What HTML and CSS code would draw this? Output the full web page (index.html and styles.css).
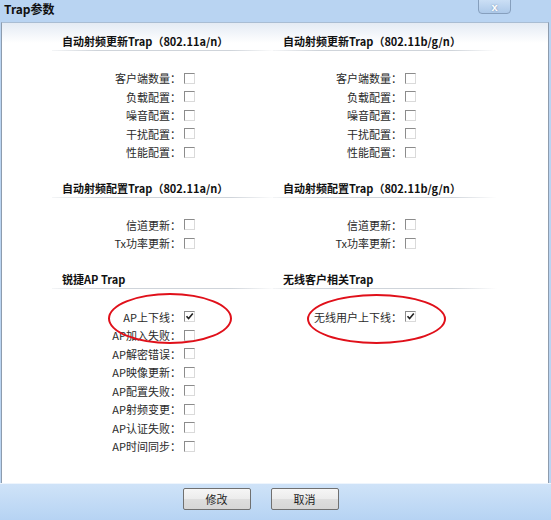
FILE: index.html
```html
<!DOCTYPE html>
<html lang="zh-CN">
<head>
    <meta charset="UTF-8">
    <title>Trap参数</title>
    <link rel="stylesheet" href="styles.css">
</head>
<body>
    <div class="dialog">
        <div class="titlebar">
            <span class="title">Trap参数</span>
            <button class="close-btn">x</button>
        </div>

        <div class="content">
            <div class="section">
                <div class="col">
                    <h3 class="col-title">自动射频更新Trap（802.11a/n）</h3>
                    <div class="rows">
                        <div class="row"><span class="label">客户端数量<span class="colon">：</span></span><span class="check"></span></div>
                        <div class="row"><span class="label">负载配置<span class="colon">：</span></span><span class="check"></span></div>
                        <div class="row"><span class="label">噪音配置<span class="colon">：</span></span><span class="check"></span></div>
                        <div class="row"><span class="label">干扰配置<span class="colon">：</span></span><span class="check"></span></div>
                        <div class="row"><span class="label">性能配置<span class="colon">：</span></span><span class="check"></span></div>
                    </div>
                </div>
                <div class="col">
                    <h3 class="col-title">自动射频更新Trap（802.11b/g/n）</h3>
                    <div class="rows">
                        <div class="row"><span class="label">客户端数量<span class="colon">：</span></span><span class="check"></span></div>
                        <div class="row"><span class="label">负载配置<span class="colon">：</span></span><span class="check"></span></div>
                        <div class="row"><span class="label">噪音配置<span class="colon">：</span></span><span class="check"></span></div>
                        <div class="row"><span class="label">干扰配置<span class="colon">：</span></span><span class="check"></span></div>
                        <div class="row"><span class="label">性能配置<span class="colon">：</span></span><span class="check"></span></div>
                    </div>
                </div>
            </div>

            <div class="section">
                <div class="col">
                    <h3 class="col-title">自动射频配置Trap（802.11a/n）</h3>
                    <div class="rows">
                        <div class="row"><span class="label">信道更新<span class="colon">：</span></span><span class="check"></span></div>
                        <div class="row"><span class="label">Tx功率更新<span class="colon">：</span></span><span class="check"></span></div>
                    </div>
                </div>
                <div class="col">
                    <h3 class="col-title">自动射频配置Trap（802.11b/g/n）</h3>
                    <div class="rows">
                        <div class="row"><span class="label">信道更新<span class="colon">：</span></span><span class="check"></span></div>
                        <div class="row"><span class="label">Tx功率更新<span class="colon">：</span></span><span class="check"></span></div>
                    </div>
                </div>
            </div>

            <div class="section section-last">
                <div class="col">
                    <h3 class="col-title">锐捷AP Trap</h3>
                    <div class="rows">
                        <div class="row"><span class="label">AP上下线<span class="colon">：</span></span><span class="check checked"><svg viewBox="0 0 11 11" width="11" height="11"><path d="M2.5 5.2 L4.6 7.6 L8.8 2.6" fill="none" stroke="#222" stroke-width="1.6"/></svg></span></div>
                        <div class="row"><span class="label">AP加入失败<span class="colon">：</span></span><span class="check"></span></div>
                        <div class="row"><span class="label">AP解密错误<span class="colon">：</span></span><span class="check"></span></div>
                        <div class="row"><span class="label">AP映像更新<span class="colon">：</span></span><span class="check"></span></div>
                        <div class="row"><span class="label">AP配置失败<span class="colon">：</span></span><span class="check"></span></div>
                        <div class="row"><span class="label">AP射频变更<span class="colon">：</span></span><span class="check"></span></div>
                        <div class="row"><span class="label">AP认证失败<span class="colon">：</span></span><span class="check"></span></div>
                        <div class="row"><span class="label">AP时间同步<span class="colon">：</span></span><span class="check"></span></div>
                    </div>
                </div>
                <div class="col">
                    <h3 class="col-title">无线客户相关Trap</h3>
                    <div class="rows">
                        <div class="row"><span class="label">无线用户上下线<span class="colon">：</span></span><span class="check checked"><svg viewBox="0 0 11 11" width="11" height="11"><path d="M2.5 5.2 L4.6 7.6 L8.8 2.6" fill="none" stroke="#222" stroke-width="1.6"/></svg></span></div>
                    </div>
                </div>
            </div>

            <div class="mark mark-left"></div>
            <div class="mark mark-right"></div>
        </div>

        <div class="footer">
            <button class="btn">修改</button>
            <button class="btn">取消</button>
        </div>
    </div>
</body>
</html>
```

FILE: styles.css
```css
body {
    margin: 0;
    padding: 0;
    font-family: "Noto Sans CJK SC", "Liberation Sans", sans-serif;
    font-size: 11px;
    color: #1e1e1e;
    background: #ffffff;
}

.dialog {
    width: 551px;
    height: 520px;
    background: #b9d4f2;
    display: flex;
    flex-direction: column;
    overflow: hidden;
}

.titlebar {
    height: 22px;
    display: flex;
    align-items: flex-start;
    justify-content: space-between;
    padding: 0 40px 0 4px;
    box-sizing: border-box;
}

.title {
    font-weight: bold;
    font-size: 12px;
    line-height: 18px;
    color: #111;
}

.close-btn {
    width: 33px;
    height: 15px;
    margin-top: -1px;
    padding: 0;
    border: 1px solid #869fbd;
    border-radius: 0 0 4px 4px;
    background: linear-gradient(to bottom, #cbdff5, #adc9e9);
    color: #ffffff;
    font-family: "Liberation Sans", sans-serif;
    font-size: 11px;
    font-weight: bold;
    line-height: 12px;
    text-shadow: 0 0 2px #6f8bab;
}

.content {
    position: relative;
    height: 461px;
    margin: 0 2px 0 1px;
    border-left: 1px solid #8d9cae;
    border-right: 1px solid #8d9cae;
    border-top: 1px solid #a9bdd3;
    box-sizing: border-box;
    background: linear-gradient(to bottom, #e4ebf4 0, #ffffff 20px);
    padding: 11px 0 0 50px;
}

.section {
    display: grid;
    grid-template-columns: 221px 221px;
    margin-bottom: 19px;
}

.section-last .col-title {
    margin-bottom: 1px;
}

.section-last .rows {
    margin-top: 19px;
}

.col-title {
    position: relative;
    margin: 0;
    padding: 0 0 3px 10px;
    font-size: 11px;
    line-height: 14px;
    font-weight: bold;
    color: #111;
}

.col-title::after {
    content: "";
    position: absolute;
    left: 0;
    right: -3px;
    bottom: 0;
    height: 1px;
    background: linear-gradient(to right, rgba(200, 206, 214, 0.2), #cfd4da 20%, #cfd4da 80%, rgba(200, 206, 214, 0));
}

.rows {
    margin-top: 18px;
}

.row {
    display: flex;
    align-items: center;
    height: 18.5px;
}

.label {
    width: 129px;
    text-align: right;
    color: #2a2a2a;
    white-space: nowrap;
}

.colon {
    font-family: "Noto Sans CJK JP", sans-serif;
}

.check {
    width: 9px;
    height: 9px;
    margin-left: 3px;
    border: 1px solid;
    border-color: #8c8c8c #dadada #dadada #8c8c8c;
    background: #ffffff;
    position: relative;
}

.check svg {
    position: absolute;
    left: -1px;
    top: -1px;
}

.mark {
    position: absolute;
    border: 2px solid #e0101a;
    border-radius: 50%;
    box-sizing: border-box;
}

.mark-left {
    left: 106px;
    top: 270px;
    width: 124px;
    height: 51px;
}

.mark-right {
    left: 305px;
    top: 271px;
    width: 139px;
    height: 50px;
}

.footer {
    flex: 1;
    display: flex;
    justify-content: center;
    align-items: flex-start;
    gap: 20px;
    padding: 4px 30px 0 0;
    border-top: 1px solid #eef5fd;
    background: linear-gradient(to bottom, #cfe3f8, #b6d3f3);
}

.btn {
    width: 68px;
    height: 22px;
    padding: 0;
    border: 1px solid #707070;
    border-radius: 2px;
    background: linear-gradient(to bottom, #f6f6f6 0, #ececec 50%, #dedede 51%, #d6d6d6 100%);
    font-family: inherit;
    font-size: 11px;
    color: #1e1e1e;
}
```
